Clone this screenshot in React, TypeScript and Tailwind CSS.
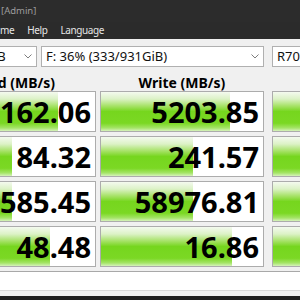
import React from "react";

const GREEN =
  "bg-[linear-gradient(180deg,#f4faef_0%,#dcf2c6_18%,#a6e266_36%,#76d61e_50%,#7bd824_80%,#a4e466_92%,#d6f2bc_100%)]";

type Cell = { v: string; w: number | string };

const rows: Cell[][] = [
  [
    { v: "7162.06", w: 126 },
    { v: "5203.85", w: 129 },
    { v: "5921.40", w: "92%" },
  ],
  [
    { v: "84.32", w: 80 },
    { v: "241.57", w: 92 },
    { v: "152.33", w: "90%" },
  ],
  [
    { v: "6585.45", w: 80 },
    { v: "58976.81", w: 92 },
    { v: "4120.18", w: "90%" },
  ],
  [
    { v: "48.48", w: 118 },
    { v: "16.86", w: 131 },
    { v: "33.71", w: "90%" },
  ],
];

function Chevron() {
  return (
    <svg width="8" height="5" viewBox="0 0 8 5" className="shrink-0">
      <path d="M0.5 0.5 L4 4 L7.5 0.5" fill="none" stroke="#7d7d7d" strokeWidth="1" />
    </svg>
  );
}

function Combo({ text, className, chevron = true }: { text: string; className: string; chevron?: boolean }) {
  return (
    <div
      className={`h-[21px] shrink-0 bg-white border border-[#b0b0b0] flex items-center justify-between pl-[4px] pr-[4px] text-[13px] text-[#111] leading-none whitespace-nowrap overflow-hidden ${className}`}
    >
      <span>{text}</span>
      {chevron && <Chevron />}
    </div>
  );
}

function NumCell({ c }: { c: Cell }) {
  return (
    <div className="relative w-[164px] shrink-0 h-[41px] bg-white border border-[#acacac] overflow-hidden">
      <div className={`absolute left-0 top-0 bottom-0 ${GREEN}`} style={{ width: typeof c.w === "number" ? `${c.w}px` : c.w }} />
      <div className="relative h-full flex items-center justify-end pr-[4px] text-[29px] font-bold leading-none text-black tracking-[0px]">
        {c.v}
      </div>
    </div>
  );
}

export default function App() {
  return (
    <div className="w-[300px] h-[300px] overflow-hidden bg-[#f0f0f0] flex flex-col font-['Noto_Sans',sans-serif]">
      {/* title bar */}
      <div className="h-[22px] shrink-0 bg-[#2c2c2c] flex items-center pl-[1px] text-[9.5px] text-[#9c9c9c] whitespace-nowrap">
        [Admin]
      </div>
      {/* menu bar */}
      <div className="h-[17px] shrink-0 bg-[#2b2b2b] flex items-center text-[10px] text-[#e6e6e6] tracking-[-0.4px] whitespace-nowrap">
        <span className="ml-[0px]">me</span>
        <span className="ml-[13px]">Help</span>
        <span className="ml-[13px]">Language</span>
      </div>
      {/* combos */}
      <div className="mt-[7px] flex ml-[-30px] shrink-0">
        <Combo text="1GiB" className="w-[67px] pl-[6px] pr-[3px]" />
        <Combo text="F: 36% (333/931GiB)" className="w-[223px] ml-[4px]" />
        <Combo text="R70%" className="w-[80px] ml-[8px]" chevron={false} />
      </div>
      {/* headers */}
      <div className="mt-[8px] h-[16px] flex ml-[-69px] shrink-0 text-[14px] font-bold leading-[16px] text-black whitespace-nowrap">
        <div className="w-[165px] shrink-0 text-center">Read (MB/s)</div>
        <div className="w-[164px] shrink-0 ml-[4px] text-center">Write (MB/s)</div>
        <div className="w-[164px] shrink-0 ml-[8px] text-center">Mix (MB/s)</div>
      </div>
      {/* rows */}
      <div className="flex flex-col gap-[4px] ml-[-69px] shrink-0">
        {rows.map((r, i) => (
          <div key={i} className="flex">
            <div className="w-[165px] shrink-0 flex">
              <div className="w-[165px]">
                <div className="relative w-[165px] h-[41px] bg-white border border-[#acacac] overflow-hidden">
                  <div className={`absolute left-0 top-0 bottom-0 ${GREEN}`} style={{ width: `${r[0].w}px` }} />
                  <div className="relative h-full flex items-center justify-end pr-[4px] text-[29px] font-bold leading-none text-black">
                    {r[0].v}
                  </div>
                </div>
              </div>
            </div>
            <div className="ml-[4px]">
              <NumCell c={r[1]} />
            </div>
            <div className="ml-[8px]">
              <NumCell c={r[2]} />
            </div>
          </div>
        ))}
      </div>
      {/* comment */}
      <div className="mt-[4px] h-[19px] shrink-0 bg-white border-t border-[#a8a8a8]" />
      <div className="h-[6px] shrink-0 bg-[#f0f0f0] border-t border-[#d8d8d8]" />
      <div className="flex-1 bg-[#1e1e1e]" />
    </div>
  );
}
